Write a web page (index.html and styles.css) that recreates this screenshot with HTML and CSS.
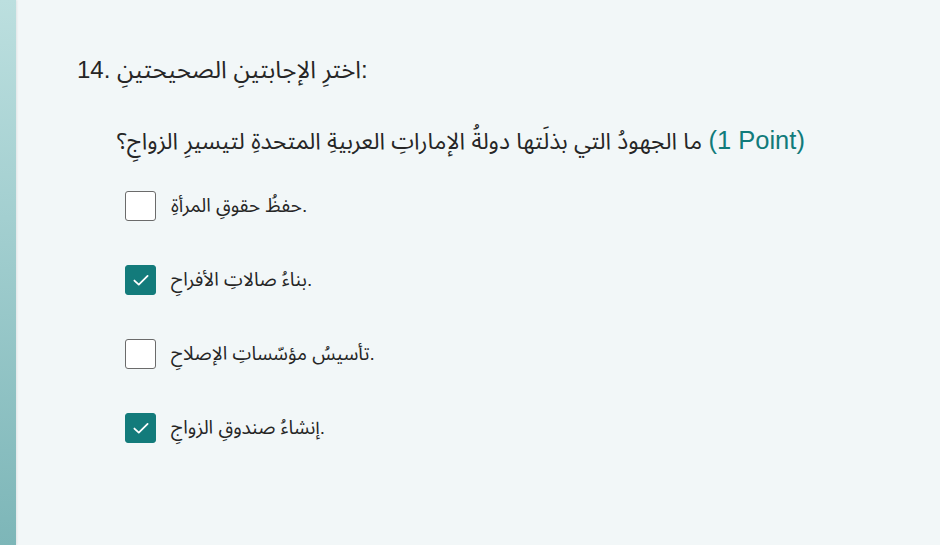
FILE: index.html
```html
<!DOCTYPE html>
<html lang="ar">
<head>
<meta charset="utf-8">
<link rel="stylesheet" href="styles.css">
</head>
<body>
<div class="page">
  <div class="strip"></div>
  <main class="main">
    <div class="title">14. اخترِ الإجابتينِ الصحيحتينِ:</div>
    <div class="question">ما الجهودُ التي بذلَتها دولةُ الإماراتِ العربيةِ المتحدةِ لتيسيرِ الزواجِ؟ <span class="points">(1 Point)</span></div>
    <div class="options">
      <label class="option">
        <span class="box"></span>
        <span class="label">حفظُ حقوقِ المرأةِ.</span>
      </label>
      <label class="option">
        <span class="box checked"><svg class="check" viewBox="0 0 16 16"><polyline points="3.2 8.4 6.4 11.4 12.8 5" fill="none" stroke="#fff" stroke-width="1.3" stroke-linecap="round" stroke-linejoin="round"/></svg></span>
        <span class="label">بناءُ صالاتِ الأفراحِ.</span>
      </label>
      <label class="option">
        <span class="box"></span>
        <span class="label">تأسيسُ مؤسّساتِ الإصلاحِ.</span>
      </label>
      <label class="option">
        <span class="box checked"><svg class="check" viewBox="0 0 16 16"><polyline points="3.2 8.4 6.4 11.4 12.8 5" fill="none" stroke="#fff" stroke-width="1.3" stroke-linecap="round" stroke-linejoin="round"/></svg></span>
        <span class="label">إنشاءُ صندوقِ الزواجِ.</span>
      </label>
    </div>
  </main>
</div>
</body>
</html>
```
FILE: styles.css
```css
html, body {
  margin: 0;
  padding: 0;
  height: 100%;
}
body {
  font-family: "Liberation Sans", "Noto Sans Arabic", "Noto Naskh Arabic", "DejaVu Sans", sans-serif;
  color: #262626;
  background: #f2f7f8;
}
.page {
  display: flex;
  height: 545px;
  overflow: hidden;
}
.strip {
  width: 16px;
  flex: 0 0 16px;
  background: linear-gradient(180deg, #bcdfdf 0%, #a3cfd0 40%, #7db6b8 100%);
  box-shadow: 1px 0 2px rgba(0, 0, 0, 0.08);
}
.main {
  flex: 1;
  padding: 54px 0 0 61px;
}
.title {
  font-size: 24px;
  line-height: 32px;
}
.question {
  margin: 38px 0 0 40px;
  font-size: 23px;
  line-height: 32px;
}
.points {
  color: #117b7b;
  font-size: 25.5px;
}
.options {
  display: flex;
  flex-direction: column;
  gap: 44px;
  margin: 34px 0 0 48px;
}
.option {
  display: flex;
  align-items: center;
  gap: 15px;
  height: 30px;
}
.box {
  box-sizing: border-box;
  width: 31px;
  height: 30px;
  border: 1.5px solid #6b6b6b;
  border-radius: 3px;
  background: #fff;
  display: flex;
  align-items: center;
  justify-content: center;
}
.box.checked {
  background: #137b7b;
  border-color: #137b7b;
}
.check {
  width: 22px;
  height: 22px;
}
.label {
  font-size: 19px;
  line-height: 30px;
}
```
